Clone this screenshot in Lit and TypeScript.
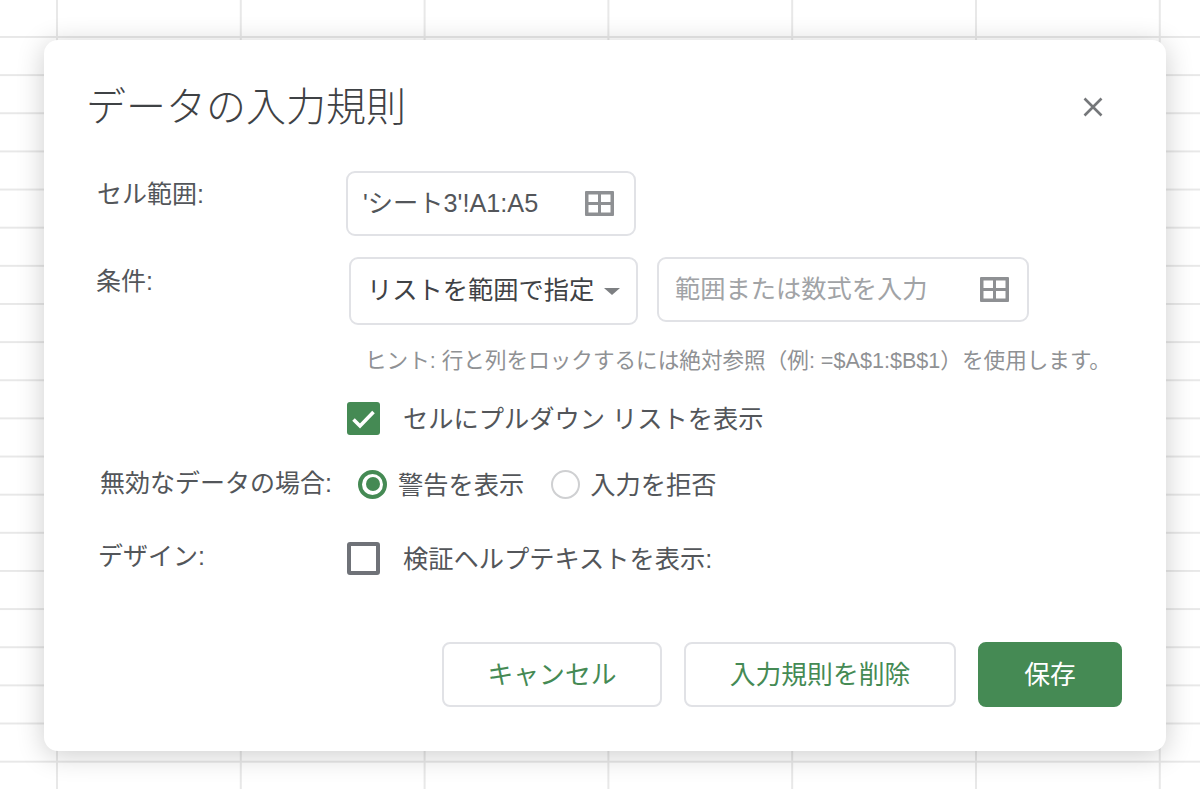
import { LitElement, html, css } from "lit";
import { customElement } from "lit/decorators.js";

const rangeIcon = html`<svg class="range" viewBox="0 0 29 25" width="29" height="25" aria-hidden="true">
  <rect x="0" y="0" width="29" height="25" rx="1" fill="#8e9093"></rect>
  <rect x="3.5" y="3.5" width="9.5" height="7.5" fill="#fff"></rect>
  <rect x="16" y="3.5" width="9.5" height="7.5" fill="#fff"></rect>
  <rect x="3.5" y="14" width="9.5" height="7.5" fill="#fff"></rect>
  <rect x="16" y="14" width="9.5" height="7.5" fill="#fff"></rect>
</svg>`;

@customElement("app-root")
export class AppRoot extends LitElement {
  static styles = css`
    :host {
      display: block;
      position: relative;
      height: 789px;
      overflow: hidden;
      background-color: #fff;
      background-image:
        linear-gradient(to right, #e8e8e8 2px, transparent 2px),
        linear-gradient(to bottom, #e8e8e8 2px, transparent 2px);
      background-size: 183.8px 100%, 100% 38.15px;
      background-position: 56px 0, 0 36px;
      font-family: "Liberation Sans", "Noto Sans CJK JP", sans-serif;
      color: #53565a;
      font-size: 25.25px;
    }
    .dialog {
      position: absolute;
      left: 44px;
      top: 40px;
      width: 1122px;
      box-sizing: border-box;
      padding: 37px 44px 44px 44px;
      background: #fff;
      border-radius: 14px;
      box-shadow: 0 4px 28px rgba(0, 0, 0, 0.2);
    }
    .head {
      display: flex;
      align-items: center;
      justify-content: space-between;
      height: 56px;
    }
    h1 {
      margin: 4px 0 0 -2px;
      font-size: 40px;
      font-weight: 300;
      line-height: 56px;
      color: #3f4245;
      white-space: nowrap;
    }
    .close {
      width: 20px;
      height: 20px;
      margin-right: 19px;
      margin-top: 4px;
    }
    .row {
      display: flex;
      align-items: flex-start;
    }
    .label {
      flex: none;
      box-sizing: border-box;
      width: 258px;
      line-height: 34px;
      font-size: 25px;
      white-space: nowrap;
    }
    .r1 { margin-top: 38px; }
    .r1 .label { padding-left: 9px; margin-top: 6px; }
    .r2 { margin-top: 21px; }
    .r2 .label { padding-left: 8px; margin-top: 7px; }
    .field {
      box-sizing: border-box;
      display: flex;
      align-items: center;
      justify-content: space-between;
      height: 65px;
      border: 2px solid #e1e2e6;
      border-radius: 9px;
      background: #fff;
      white-space: nowrap;
    }
    .field .text { padding-bottom: 6px; }
    .sheet {
      width: 290px;
      padding: 0 20px 0 15px;
    }
    .select {
      width: 289px;
      height: 68px;
      margin-left: 3px;
      padding: 0 16px 0 16px;
      color: #3f4245;
    }
    .caret {
      width: 0;
      height: 0;
      border-left: 8px solid transparent;
      border-right: 8px solid transparent;
      border-top: 7px solid #7d7f82;
    }
    .formula {
      width: 372px;
      margin-left: 19px;
      padding: 0 18px 0 16px;
      color: #a1a3a6;
    }
    .hint {
      margin: 22px 0 0 277px;
      font-size: 21.6px;
      line-height: 28px;
      color: #8f9194;
      white-space: nowrap;
    }
    .check-row {
      display: flex;
      align-items: center;
      gap: 23px;
      margin: 27px 0 0 259px;
      height: 33px;
      white-space: nowrap;
    }
    .check-row .text { padding-bottom: 3px; }
    .box {
      flex: none;
      box-sizing: border-box;
      width: 33px;
      height: 33px;
      border-radius: 3px;
    }
    .box svg { display: block; }
    .box.on { background: #458a54; }
    .box.off { border: 4px solid #6f7278; }
    .r3 { margin-top: 32px; align-items: center; height: 34px; }
    .r3 .label { width: 270px; padding-left: 12px; padding-bottom: 2px; }
    .radio {
      flex: none;
      box-sizing: border-box;
      width: 29px;
      height: 29px;
      border-radius: 50%;
      border: 2px solid #cfd0d2;
      margin-right: 11px;
      display: flex;
      align-items: center;
      justify-content: center;
    }
    .radio.on { border: 4px solid #458a54; }
    .radio.on::after {
      content: "";
      width: 14px;
      height: 14px;
      border-radius: 50%;
      background: #458a54;
    }
    .radio-label { margin-right: 27px; white-space: nowrap; padding-bottom: 3px; }
    .radio + .radio-label + .radio { margin-right: 10px; }
    .r4 { margin-top: 41px; align-items: flex-start; }
    .r4 .label { padding-left: 10px; margin-top: -3px; }
    .r4 .check-row { margin: 0 0 0 1px; }
    .foot {
      display: flex;
      justify-content: flex-end;
      gap: 22px;
      margin-top: 67px;
    }
    .btn {
      box-sizing: border-box;
      height: 65px;
      padding-bottom: 4px;
      display: flex;
      align-items: center;
      justify-content: center;
      border: 2px solid #e1e2e6;
      border-radius: 8px;
      color: #458a54;
      background: #fff;
      font-size: 25.8px;
    }
    .cancel { width: 220px; }
    .remove { width: 272px; }
    .save { width: 144px; background: #458a54; border-color: #458a54; color: #fff; }
  `;

  render() {
    return html`
      <div class="dialog">
        <div class="head">
          <h1>データの入力規則</h1>
          <svg class="close" viewBox="0 0 20 20" aria-hidden="true">
            <path d="M1.5 1.5 L18.5 18.5 M18.5 1.5 L1.5 18.5" stroke="#75777a" stroke-width="2.6" fill="none"></path>
          </svg>
        </div>
        <div class="row r1">
          <div class="label">セル範囲:</div>
          <div class="field sheet"><span class="text">'シート3'!A1:A5</span>${rangeIcon}</div>
        </div>
        <div class="row r2">
          <div class="label">条件:</div>
          <div class="field select"><span class="text">リストを範囲で指定</span><span class="caret"></span></div>
          <div class="field formula"><span class="text">範囲または数式を入力</span>${rangeIcon}</div>
        </div>
        <div class="hint">ヒント: 行と列をロックするには絶対参照（例: =$A$1:$B$1）を使用します。</div>
        <div class="check-row">
          <span class="box on">
            <svg viewBox="0 0 33 33" width="33" height="33" aria-hidden="true">
              <path d="M6.5 17.5 L13 24 L26.5 10" stroke="#fff" stroke-width="3.6" fill="none"></path>
            </svg>
          </span>
          <span class="text">セルにプルダウン リストを表示</span>
        </div>
        <div class="row r3">
          <div class="label">無効なデータの場合:</div>
          <span class="radio on"></span><span class="radio-label">警告を表示</span>
          <span class="radio"></span><span class="radio-label">入力を拒否</span>
        </div>
        <div class="row r4">
          <div class="label">デザイン:</div>
          <div class="check-row">
            <span class="box off"></span>
            <span class="text">検証ヘルプテキストを表示:</span>
          </div>
        </div>
        <div class="foot">
          <div class="btn cancel">キャンセル</div>
          <div class="btn remove">入力規則を削除</div>
          <div class="btn save">保存</div>
        </div>
      </div>
    `;
  }
}
